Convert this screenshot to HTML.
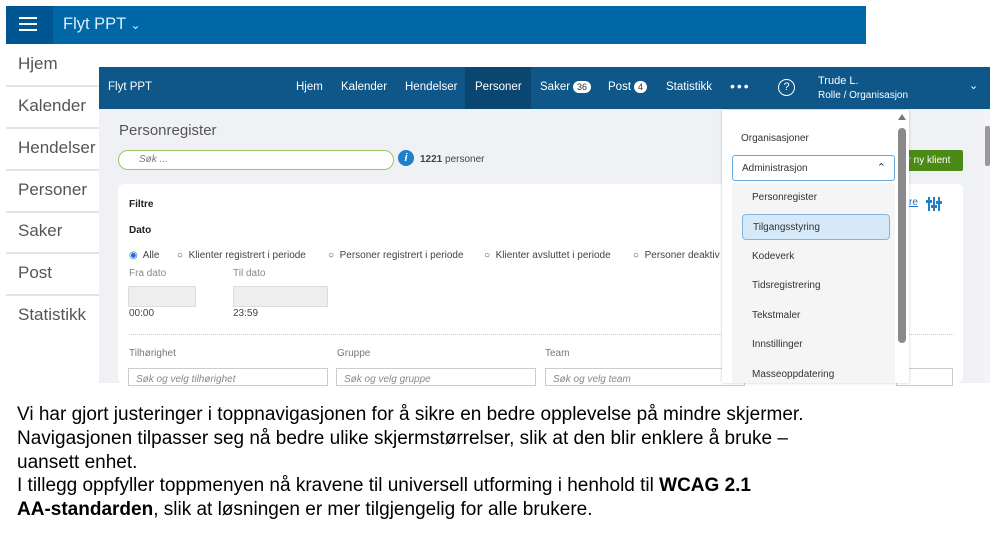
<!DOCTYPE html><html><head><meta charset="utf-8"><style>
*{margin:0;padding:0;box-sizing:border-box}
body{width:998px;height:540px;background:#fff;font-family:"Liberation Sans",sans-serif;position:relative;overflow:hidden}
.a{position:absolute;white-space:nowrap}
.top{left:6px;top:6px;width:860px;height:38px;background:#0068a6}
.menu{left:6px;width:93px;height:42px;border-bottom:2px solid #e4e4e4;font-size:17px;color:#555;padding-left:12px;line-height:38px}
.nav{left:99px;top:67px;width:891px;height:42px;background:#0f5788;color:#fff;font-size:11.5px}
.nav span{position:absolute;top:14px;white-space:nowrap}
.nav .badge{position:static;display:inline-block;background:#fff;color:#333;border-radius:7px;font-size:9px;padding:0 4px;line-height:12px;margin-left:3px}
.cont{left:99px;top:109px;width:891px;height:274px;background:#eff1f4}
.s{font-size:10px;color:#444}
.dd{font-size:10px;color:#333}
.r{position:absolute;top:250px;font-size:10px;color:#444;white-space:nowrap}
</style></head><body>
<div class="a top"></div>
<div class="a" style="left:6px;top:6px;width:47px;height:38px;background:#005690"></div>
<div class="a" style="left:19px;top:17px;width:18px;height:2px;background:#fff;box-shadow:0 6px 0 #fff,0 12px 0 #fff"></div>
<div class="a" style="left:63px;top:15px;color:#dfeefa;font-size:16.5px">Flyt PPT <span style="font-size:12px">&#8964;</span></div>
<div class="a menu" style="top:45px">Hjem</div>
<div class="a menu" style="top:87px">Kalender</div>
<div class="a menu" style="top:129px">Hendelser</div>
<div class="a menu" style="top:171px">Personer</div>
<div class="a menu" style="top:212px">Saker</div>
<div class="a menu" style="top:254px">Post</div>
<div class="a menu" style="top:296px;border:none">Statistikk</div>

<div class="a nav">
<span style="left:9px">Flyt PPT</span>
<span style="left:197px">Hjem</span>
<span style="left:242px">Kalender</span>
<span style="left:306px">Hendelser</span>
<div class="a" style="left:366px;top:0;width:66px;height:42px;background:#0b4670"></div>
<span style="left:376px">Personer</span>
<span style="left:441px">Saker<span class="badge">36</span></span>
<span style="left:509px">Post<span class="badge">4</span></span>
<span style="left:567px">Statistikk</span>
<span style="left:631px;top:11px;font-size:14px;letter-spacing:2px">•••</span>
<div class="a" style="left:679px;top:12px;width:17px;height:17px;border:1.5px solid #fff;border-radius:50%;text-align:center;font-size:11px;line-height:14px">?</div>
<span style="left:719px;top:8px;font-size:11px">Trude L.</span>
<span style="left:719px;top:23px;font-size:10px">Rolle / Organisasjon</span>
<span style="left:870px;top:12px;font-size:11px">&#8964;</span>
</div>
<div class="a cont"></div>
<div class="a" style="left:119px;top:122px;font-size:15px;color:#555">Personregister</div>
<div class="a" style="left:118px;top:150px;width:276px;height:20px;border:1.5px solid #9cc56a;border-radius:10px;background:#fff;font-size:10px;color:#777;font-style:italic;padding:3px 0 0 20px">Søk ...</div>
<div class="a" style="left:398px;top:150px;width:16px;height:16px;border-radius:50%;background:#1f7fc8;color:#fff;font-size:11px;text-align:center;font-weight:bold;font-style:italic;line-height:16px">i</div>
<div class="a s" style="left:420px;top:154px"><b>1221</b> personer</div>
<div class="a" style="left:880px;top:150px;width:83px;height:21px;background:#4c8a18;color:#fff;font-size:10px;padding:5px 0 0 22px;border-radius:2px">er ny klient</div>
<div class="a" style="left:118px;top:184px;width:845px;height:199px;background:#fff;border-radius:6px"></div>
<div class="a s" style="left:129px;top:199px;font-weight:bold;color:#222">Filtre</div>
<div class="a s" style="left:129px;top:225px;font-weight:bold;color:#222">Dato</div>
<div class="r" style="left:129px"><span style="color:#1f6fd0">◉</span>&nbsp; Alle</div>
<div class="r" style="left:177px">○&nbsp; Klienter registrert i periode</div>
<div class="r" style="left:328px">○&nbsp; Personer registrert i periode</div>
<div class="r" style="left:484px">○&nbsp; Klienter avsluttet i periode</div>
<div class="r" style="left:633px">○&nbsp; Personer deaktiv</div>
<div class="a s" style="left:129px;top:268px;color:#888">Fra dato</div>
<div class="a s" style="left:233px;top:268px;color:#888">Til dato</div>
<div class="a" style="left:128px;top:286px;width:68px;height:21px;background:#eee;border:1px solid #ddd"></div>
<div class="a" style="left:233px;top:286px;width:95px;height:21px;background:#eee;border:1px solid #ddd"></div>
<div class="a s" style="left:129px;top:308px">00:00</div>
<div class="a s" style="left:233px;top:308px">23:59</div>
<div class="a" style="left:129px;top:334px;width:825px;border-top:1px dotted #ccc"></div>
<div class="a s" style="left:129px;top:348px;color:#777">Tilhørighet</div>
<div class="a s" style="left:337px;top:348px;color:#777">Gruppe</div>
<div class="a s" style="left:545px;top:348px;color:#777">Team</div>
<div class="a s" style="left:128px;top:368px;width:200px;height:18px;border:1px solid #ccc;padding:5px 0 0 7px;font-style:italic;color:#888">Søk og velg tilhørighet</div>
<div class="a s" style="left:336px;top:368px;width:200px;height:18px;border:1px solid #ccc;padding:5px 0 0 7px;font-style:italic;color:#888">Søk og velg gruppe</div>
<div class="a s" style="left:545px;top:368px;width:200px;height:18px;border:1px solid #ccc;padding:5px 0 0 7px;font-style:italic;color:#888">Søk og velg team</div>
<div class="a" style="left:896px;top:368px;width:57px;height:18px;border:1px solid #ccc"></div>
<div class="a" style="left:904px;top:197px;font-size:10px;color:#1f6fd0;text-decoration:underline">ltre</div>
<svg class="a" style="left:926px;top:196px" width="16" height="16" viewBox="0 0 16 16" fill="#1f7fc8"><rect x="2" y="1" width="2" height="14"/><rect x="7" y="1" width="2" height="14"/><rect x="12" y="1" width="2" height="14"/><rect x="0" y="4" width="6" height="3"/><rect x="5" y="9" width="6" height="3"/><rect x="10" y="5" width="6" height="3"/></svg>
<div class="a" style="left:984px;top:109px;width:6px;height:274px;background:#f4f4f4"></div>
<div class="a" style="left:985px;top:126px;width:5px;height:40px;background:#999;border-radius:2px"></div>

<div class="a" style="left:722px;top:110px;width:187px;height:273px;background:#fff;box-shadow:0 0 3px rgba(0,0,0,.2)"></div>
<div class="a" style="left:732px;top:183px;width:163px;height:200px;background:#f5f5f5"></div>
<div class="a dd" style="left:741px;top:133px">Organisasjoner</div>
<div class="a dd" style="left:732px;top:155px;width:163px;height:26px;border:1px solid #6aa7d9;border-radius:3px;background:#fff;padding:7px 0 0 9px">Administrasjon<span style="position:absolute;right:8px;top:5px;font-size:11px">&#8963;</span></div>
<div class="a dd" style="left:752px;top:192px">Personregister</div>
<div class="a dd" style="left:742px;top:214px;width:148px;height:26px;background:#d5e9f8;border:1px solid #7cb5e3;border-radius:4px;padding:7px 0 0 10px">Tilgangsstyring</div>
<div class="a dd" style="left:752px;top:251px">Kodeverk</div>
<div class="a dd" style="left:752px;top:280px">Tidsregistrering</div>
<div class="a dd" style="left:752px;top:310px">Tekstmaler</div>
<div class="a dd" style="left:752px;top:339px">Innstillinger</div>
<div class="a dd" style="left:752px;top:369px">Masseoppdatering</div>
<div class="a" style="left:898px;top:128px;width:8px;height:215px;background:#8a8a8a;border-radius:4px"></div>
<div class="a" style="left:898px;top:114px;width:0;height:0;border-left:4px solid transparent;border-right:4px solid transparent;border-bottom:6px solid #777"></div>

<div class="a" style="left:17px;top:403px;font-size:19px;line-height:23.8px;color:#000">Vi har gjort justeringer i toppnavigasjonen for å sikre en bedre opplevelse på mindre skjermer.<br>Navigasjonen tilpasser seg nå bedre ulike skjermstørrelser, slik at den blir enklere å bruke –<br>uansett enhet.<br>I tillegg oppfyller toppmenyen nå kravene til universell utforming i henhold til <b>WCAG 2.1</b><br><b>AA-standarden</b>, slik at løsningen er mer tilgjengelig for alle brukere.</div>
</body></html>
